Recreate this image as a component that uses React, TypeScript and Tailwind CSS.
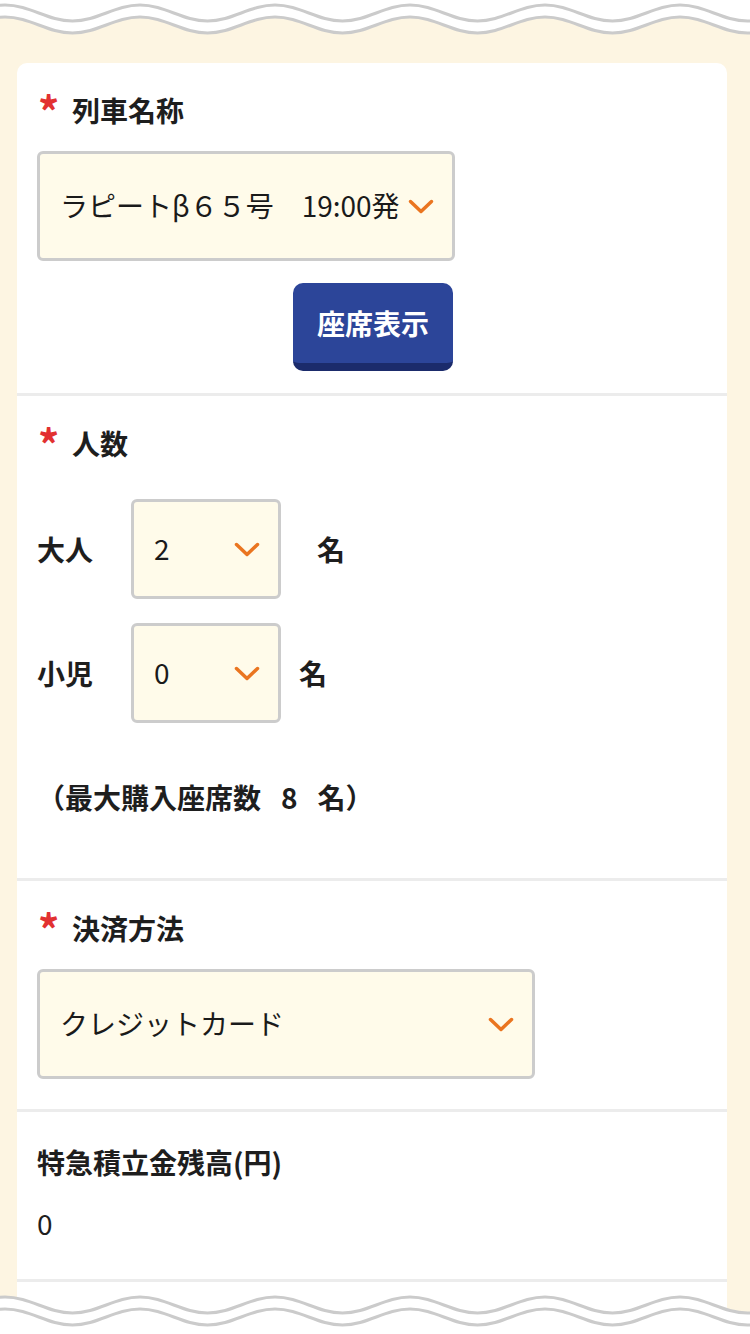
import type { ReactNode } from 'react'

const PERIOD = 135

// smooth wave line, crest at y0, trough at y0 + depth, crests at x = phase + PERIOD * k
const wavePath = (y0: number, depth: number, phase: number) => {
  const start = phase - PERIOD * 2
  let d = `M ${start} ${y0}`
  for (let x = start; x < 900; x += PERIOD) {
    const h = PERIOD / 2
    d += ` C ${x + 25} ${y0} ${x + h - 25} ${y0 + depth} ${x + h} ${y0 + depth}`
    d += ` C ${x + h + 25} ${y0 + depth} ${x + PERIOD - 25} ${y0} ${x + PERIOD} ${y0}`
  }
  return d
}

const TopWave = () => (
  <svg className="block w-full" width="750" height="40" viewBox="0 0 750 40" preserveAspectRatio="none">
    <path d={`${wavePath(17, 16, 5)} L 900 0 L -300 0 Z`} fill="#ffffff" />
    <path d={wavePath(5, 16, 5)} fill="none" stroke="#cbcbcb" strokeWidth="3" />
    <path d={wavePath(17, 16, 5)} fill="none" stroke="#cbcbcb" strokeWidth="3" />
  </svg>
)

const BottomWave = () => (
  <div className="fixed bottom-0 left-0 w-full pointer-events-none">
    <svg className="block w-full" width="750" height="44" viewBox="0 0 750 44" preserveAspectRatio="none">
      <path d={`${wavePath(7, 16, 5)} L 900 44 L -300 44 Z`} fill="#ffffff" />
      <path d={wavePath(7, 16, 5)} fill="none" stroke="#cbcbcb" strokeWidth="3" />
      <path d={wavePath(19, 16, 5)} fill="none" stroke="#cbcbcb" strokeWidth="3" />
    </svg>
  </div>
)

const Chevron = () => (
  <svg width="26" height="15" viewBox="0 0 26 15" fill="none" className="shrink-0">
    <path d="M2.5 2.5L13 12.5L23.5 2.5" stroke="#ea7520" strokeWidth="3.5" strokeLinecap="round" strokeLinejoin="round" />
  </svg>
)

const Label = ({ children, required = true }: { children: ReactNode; required?: boolean }) => (
  <div className="flex items-center h-[40px] pl-[20px]">
    {required && (
      <span className="w-[35px] text-[42px] leading-none font-bold text-[#e23131] -mt-[1px] pl-[1px]">*</span>
    )}
    <span className="text-[28px] leading-[40px] font-bold text-[#1e1e1e]">{children}</span>
  </div>
)

const Select = ({ value, className }: { value: string; className: string }) => (
  <div
    className={`flex items-center justify-between border-[3px] border-[#cccccc] rounded-[6px] bg-[#fffbea] pl-[20px] pr-[18px] ${className}`}
  >
    <span className="text-[28px] text-[#1a1a1a] whitespace-nowrap -mt-[2px]">{value}</span>
    <Chevron />
  </div>
)

export default function App() {
  return (
    <div className="min-h-[1700px] bg-[#fdf5e2] font-['Noto_Sans_CJK_JP',sans-serif] text-[#1e1e1e]">
      <TopWave />

      <div className="mt-[23px] ml-[17px] mr-[23px] bg-white rounded-t-[10px]">
        {/* 列車名称 */}
        <section className="pt-[27px] pb-[22px] border-b-[3px] border-[#ececec]">
          <Label>列車名称</Label>
          <Select value="ラピートβ６５号　19:00発" className="mt-[21px] ml-[20px] w-[418px] h-[110px]" />
          <div className="w-[416px] ml-[20px] mt-[22px] flex justify-end">
            <button className="w-[160px] h-[88px] rounded-[10px] bg-[#2c4599] border-b-[8px] border-[#1b2b6b] text-white text-[28px] font-bold">
              座席表示
            </button>
          </div>
        </section>

        {/* 人数 */}
        <section className="pt-[27px] pb-[61px] border-b-[3px] border-[#ececec]">
          <Label>人数</Label>
          <div className="mt-[36px] pl-[20px] flex items-center">
            <span className="w-[94px] text-[28px] font-bold">大人</span>
            <Select value="2" className="w-[150px] h-[100px]" />
            <span className="ml-[36px] text-[28px] font-bold">名</span>
          </div>
          <div className="mt-[24px] pl-[20px] flex items-center">
            <span className="w-[94px] text-[28px] font-bold">小児</span>
            <Select value="0" className="w-[150px] h-[100px]" />
            <span className="ml-[18px] text-[28px] font-bold">名</span>
          </div>
          <p className="mt-[54px] pl-[20px] text-[28px] leading-[40px] font-bold">
            （最大購入座席数<span className="mx-[20px]">8</span>名）
          </p>
        </section>

        {/* 決済方法 */}
        <section className="pt-[27px] pb-[30px] border-b-[3px] border-[#ececec]">
          <Label>決済方法</Label>
          <Select value="クレジットカード" className="mt-[21px] ml-[20px] w-[498px] h-[110px]" />
        </section>

        {/* 特急積立金残高 */}
        <section className="pt-[30px] pb-[36px] border-b-[3px] border-[#ececec]">
          <Label required={false}>特急積立金残高(円)</Label>
          <p className="mt-[21px] pl-[20px] text-[28px] leading-[40px]">0</p>
        </section>

        <section className="h-[300px]" />
      </div>

      <BottomWave />
    </div>
  )
}
